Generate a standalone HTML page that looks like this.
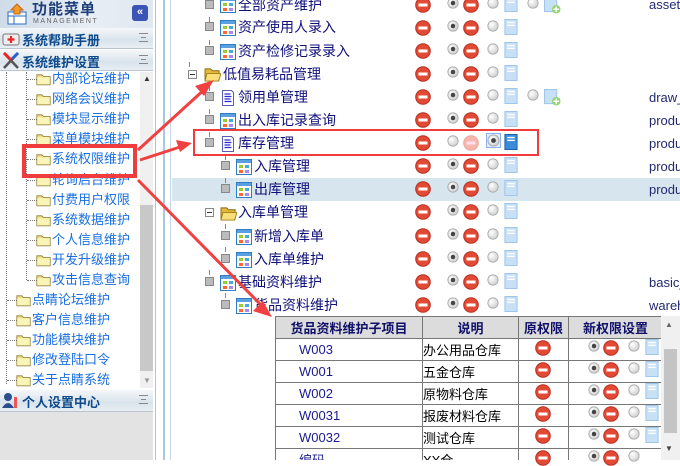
<!DOCTYPE html><html><head><meta charset="utf-8"><style>
*{margin:0;padding:0;box-sizing:border-box}
body{width:680px;height:460px;overflow:hidden;position:relative;background:#fff;font-family:"Liberation Sans","Noto Sans CJK SC",sans-serif}
.a{position:absolute}
.lt{position:absolute;font-size:13px;color:#1a6fe0;white-space:nowrap;line-height:16px}
.mt{position:absolute;font-size:14px;color:#10107a;white-space:nowrap;line-height:18px}
.rt{position:absolute;left:649px;font-size:13px;color:#222a70;white-space:nowrap}
.bar{position:absolute;left:0;width:153px;height:21px;background:linear-gradient(#f4f7fa,#d9e3ec 60%,#e8eef3);border-bottom:1px solid #b9c6d2}
.bar b{position:absolute;left:22px;top:2px;font-size:13px;color:#0c4a8c;font-weight:bold}
.eq{position:absolute;right:5px;top:5px;width:9px;height:9px;border-top:1px solid #888;border-bottom:1px solid #888}
.eq:after{content:"";position:absolute;left:2px;top:3px;width:5px;height:1px;background:#888}
svg.i{position:absolute}
table{border-collapse:collapse}
td,th{border:1px solid #777;height:22px;font-size:13px}
th{background:#dcdcdc;color:#10106a;font-weight:bold}
</style></head><body>
<svg width="0" height="0" style="position:absolute">
<defs>
<radialGradient id="rg" cx=".35" cy=".35" r=".8"><stop offset="0" stop-color="#fff"/><stop offset="1" stop-color="#c8c8c8"/></radialGradient>
<symbol id="stop" viewBox="0 0 16 16"><circle cx="8" cy="8" r="7.3" fill="#e24a36" stroke="#b8301f"/><rect x="3.5" y="6.5" width="9" height="3" fill="#fff"/></symbol>
<symbol id="stopf" viewBox="0 0 16 16"><circle cx="8" cy="8" r="7.3" fill="#f5b8ae" stroke="#eea59a"/><rect x="3.5" y="6.5" width="9" height="3" fill="#fde"/></symbol>
<symbol id="rad" viewBox="0 0 14 14"><circle cx="7" cy="7" r="6" fill="url(#rg)" stroke="#a8a8a8"/></symbol>
<symbol id="radc" viewBox="0 0 14 14"><circle cx="7" cy="7" r="6" fill="url(#rg)" stroke="#a8a8a8"/><circle cx="7" cy="7" r="2.6" fill="#444"/></symbol>
<symbol id="doc" viewBox="0 0 14 17"><rect x=".5" y=".5" width="13" height="16" fill="#c8e0f6" stroke="#9cc4ea"/><rect x="3" y="3" width="8" height="1.5" fill="#fff"/><rect x="3" y="6" width="8" height="1.5" fill="#fff"/></symbol>
<symbol id="docd" viewBox="0 0 14 17"><rect x=".5" y=".5" width="13" height="16" fill="#3a8cd8" stroke="#1d5fa6"/><rect x="3" y="3" width="8" height="1.5" fill="#fff"/><rect x="3" y="6" width="8" height="1.5" fill="#fff"/></symbol>
<symbol id="docp" viewBox="0 0 18 18"><rect x=".5" y=".5" width="13" height="15" fill="#c8e0f6" stroke="#9cc4ea"/><circle cx="13" cy="13" r="4.5" fill="#8fd56a"/><path d="M13 10v6M10 13h6" stroke="#fff" stroke-width="1.6"/></symbol>
<symbol id="grid" viewBox="0 0 16 16"><rect x=".5" y=".5" width="15" height="15" fill="#fff" stroke="#2f7cc8"/><rect x="1" y="1" width="14" height="3" fill="#5aa0e0"/><rect x="3" y="6" width="4" height="3" fill="#9c3"/><rect x="9" y="6" width="4" height="3" fill="#4ad"/><rect x="3" y="11" width="4" height="3" fill="#f63"/><rect x="9" y="11" width="4" height="3" fill="#a8e"/></symbol>
<symbol id="page" viewBox="0 0 16 16"><path d="M2.5 .5h9l2 2v13h-11z" fill="#fff" stroke="#5b5bb0"/><path d="M4.5 4h6M4.5 6.5h7M4.5 9h6M4.5 11.5h7" stroke="#2a2ad0" stroke-width="1.2"/></symbol>
<symbol id="fold" viewBox="0 0 18 16"><path d="M1 3h6l2 2h8v10H1z" fill="#efe08a" stroke="#8a7a30"/><path d="M1.5 6h15v8.5h-15z" fill="#fbf4b8"/></symbol>
<symbol id="fopen" viewBox="0 0 18 16"><path d="M1 2h6l2 2h7v10H1z" fill="#e2b840" stroke="#8a6a10"/><path d="M3 7h15l-2.5 8H1z" fill="#f8df7a" stroke="#a07c10"/></symbol>
<symbol id="minus" viewBox="0 0 9 9"><rect x=".5" y=".5" width="8" height="8" fill="#fff" stroke="#888"/><path d="M2 4.5h5" stroke="#333"/></symbol>
</defs></svg>

<!-- LEFT PANEL -->
<div class="a" style="left:0;top:0;width:153px;height:28px;background:linear-gradient(90deg,#cfdbe8,#e8eef5 60%,#dfe7f0)"></div>
<svg class="i" style="left:6px;top:3px" width="22" height="22" viewBox="0 0 22 22"><rect x="2" y="9" width="18" height="12" fill="#fff" stroke="#2a6fc0"/><path d="M2 13h18M8 13v8" stroke="#2a6fc0"/><path d="M11 1l6 6h-3v4h-6V7H5z" fill="#f39a2a" stroke="#c0661a"/></svg>
<div class="a" style="left:32px;top:1px;font-size:15px;line-height:17px;font-weight:bold;color:#1f3f7a;letter-spacing:1px">功能菜单</div>
<div class="a" style="left:33px;top:18px;font-size:7px;line-height:8px;letter-spacing:1.5px;color:#666">MANAGEMENT</div>
<div class="a" style="left:132px;top:5px;width:16px;height:16px;background:#3a55b5;border-radius:3px;color:#fff;font-size:11px;text-align:center;line-height:15px;font-weight:bold">«</div>
<div class="bar" style="top:28px"><svg class="i" style="left:2px;top:3px" width="18" height="15" viewBox="0 0 18 15"><rect x="1" y="3" width="16" height="11" rx="2" fill="#eee" stroke="#777"/><path d="M9 5v7M5.5 8.5h7" stroke="#e22" stroke-width="2.2"/></svg><b>系统帮助手册</b><span class="eq"></span></div>
<div class="bar" style="top:50px"><svg class="i" style="left:2px;top:1px" width="18" height="19" viewBox="0 0 18 19"><path d="M2 2l14 15M16 2L2 17" stroke="#555" stroke-width="2.5"/><path d="M2 2l7 7" stroke="#e22" stroke-width="3"/><path d="M16 2l-6 6" stroke="#2a5fd0" stroke-width="3"/></svg><b>系统维护设置</b><span class="eq"></span></div>
<div class="a" style="left:0;top:72px;width:140px;height:316px;background:#fff"></div>
<div class="a" style="left:140px;top:72px;width:13px;height:316px;background:#f0f0f0"></div>
<div class="a" style="left:140px;top:205px;width:13px;height:166px;background:#c8c8c8"></div>
<div class="a" style="left:143px;top:74px;font-size:8px;color:#333">▲</div>
<div class="a" style="left:143px;top:376px;font-size:8px;color:#999">▼</div>
<div class="a" style="left:6px;top:72px;height:312px;border-left:1px dotted #777"></div>
<div class="a" style="left:26px;top:72px;height:208px;border-left:1px dotted #777"></div>
<div class="lt" style="left:52px;top:71px">内部论坛维护</div>
<div class="lt" style="left:52px;top:91px">网络会议维护</div>
<div class="lt" style="left:52px;top:111px">模块显示维护</div>
<div class="lt" style="left:52px;top:131px">菜单模块维护</div>
<div class="lt" style="left:52px;top:151px">系统权限维护</div>
<div class="lt" style="left:52px;top:172px">轮询启台维护</div>
<div class="lt" style="left:52px;top:192px">付费用户权限</div>
<div class="lt" style="left:52px;top:212px">系统数据维护</div>
<div class="lt" style="left:52px;top:232px">个人信息维护</div>
<div class="lt" style="left:52px;top:252px">开发升级维护</div>
<div class="lt" style="left:52px;top:272px">攻击信息查询</div>
<div class="lt" style="left:32px;top:292px">点睛论坛维护</div>
<div class="lt" style="left:32px;top:312px">客户信息维护</div>
<div class="lt" style="left:32px;top:332px">功能模块维护</div>
<div class="lt" style="left:32px;top:352px">修改登陆口令</div>
<div class="lt" style="left:32px;top:372px">关于点睛系统</div>
<div class="a" style="left:27px;top:79px;width:10px;border-top:1px dotted #777"></div><svg class="i" style="left:36px;top:72px" width="15" height="14"><use href="#fold"/></svg>
<div class="a" style="left:27px;top:99px;width:10px;border-top:1px dotted #777"></div><svg class="i" style="left:36px;top:92px" width="15" height="14"><use href="#fold"/></svg>
<div class="a" style="left:27px;top:119px;width:10px;border-top:1px dotted #777"></div><svg class="i" style="left:36px;top:112px" width="15" height="14"><use href="#fold"/></svg>
<div class="a" style="left:27px;top:139px;width:10px;border-top:1px dotted #777"></div><svg class="i" style="left:36px;top:132px" width="15" height="14"><use href="#fold"/></svg>
<div class="a" style="left:27px;top:159px;width:10px;border-top:1px dotted #777"></div><svg class="i" style="left:36px;top:152px" width="15" height="14"><use href="#fold"/></svg>
<div class="a" style="left:27px;top:180px;width:10px;border-top:1px dotted #777"></div><svg class="i" style="left:36px;top:173px" width="15" height="14"><use href="#fold"/></svg>
<div class="a" style="left:27px;top:200px;width:10px;border-top:1px dotted #777"></div><svg class="i" style="left:36px;top:193px" width="15" height="14"><use href="#fold"/></svg>
<div class="a" style="left:27px;top:220px;width:10px;border-top:1px dotted #777"></div><svg class="i" style="left:36px;top:213px" width="15" height="14"><use href="#fold"/></svg>
<div class="a" style="left:27px;top:240px;width:10px;border-top:1px dotted #777"></div><svg class="i" style="left:36px;top:233px" width="15" height="14"><use href="#fold"/></svg>
<div class="a" style="left:27px;top:260px;width:10px;border-top:1px dotted #777"></div><svg class="i" style="left:36px;top:253px" width="15" height="14"><use href="#fold"/></svg>
<div class="a" style="left:27px;top:280px;width:10px;border-top:1px dotted #777"></div><svg class="i" style="left:36px;top:273px" width="15" height="14"><use href="#fold"/></svg>
<div class="a" style="left:7px;top:300px;width:10px;border-top:1px dotted #777"></div><svg class="i" style="left:16px;top:293px" width="15" height="14"><use href="#fold"/></svg>
<div class="a" style="left:7px;top:320px;width:10px;border-top:1px dotted #777"></div><svg class="i" style="left:16px;top:313px" width="15" height="14"><use href="#fold"/></svg>
<div class="a" style="left:7px;top:340px;width:10px;border-top:1px dotted #777"></div><svg class="i" style="left:16px;top:333px" width="15" height="14"><use href="#fold"/></svg>
<div class="a" style="left:7px;top:360px;width:10px;border-top:1px dotted #777"></div><svg class="i" style="left:16px;top:353px" width="15" height="14"><use href="#fold"/></svg>
<div class="a" style="left:7px;top:380px;width:10px;border-top:1px dotted #777"></div><svg class="i" style="left:16px;top:373px" width="15" height="14"><use href="#fold"/></svg>
<div class="bar" style="top:390px;height:22px"><svg class="i" style="left:2px;top:2px" width="18" height="17" viewBox="0 0 18 17"><circle cx="6" cy="5" r="4" fill="#2a4f90"/><path d="M0 16q6-10 12 0z" fill="#2a4f90"/><rect x="12" y="5" width="3" height="11" fill="#e55"/></svg><b>个人设置中心</b><span class="eq"></span></div>
<div class="a" style="left:0;top:412px;width:153px;height:48px;background-color:#fff;background-image:radial-gradient(#999 0.6px,transparent 0.8px);background-size:2px 2px"></div>
<div class="a" style="left:153px;top:0;width:19px;height:460px;background:#fff"></div>
<div class="a" style="left:155px;top:0;width:1px;height:460px;background:#aac4dc"></div>
<div class="a" style="left:163px;top:0;width:2px;height:460px;background:#a9c6e2"></div>
<div class="a" style="left:170px;top:0;width:1px;height:460px;background:#c4d6e6"></div>

<!-- MAIN -->
<div class="a" style="left:172px;top:178px;width:508px;height:23px;background:#d6e5ee"></div>
<div class="a" style="left:189px;top:62px;width:1px;height:5px;background:#888"></div>
<div class="a" style="left:209px;top:0;width:1px;height:8px;background:#888"></div>
<div class="a" style="left:209px;top:17px;width:1px;height:5px;background:#888"></div>
<div class="a" style="left:209px;top:40px;width:1px;height:5px;background:#888"></div>
<div class="a" style="left:209px;top:86px;width:1px;height:5px;background:#888"></div>
<div class="a" style="left:209px;top:109px;width:1px;height:5px;background:#888"></div>
<div class="a" style="left:209px;top:132px;width:1px;height:5px;background:#888"></div>
<div class="a" style="left:209px;top:270px;width:1px;height:5px;background:#888"></div>
<div class="a" style="left:225px;top:155px;width:1px;height:5px;background:#888"></div>
<div class="a" style="left:225px;top:178px;width:1px;height:5px;background:#888"></div>
<div class="a" style="left:225px;top:224px;width:1px;height:5px;background:#888"></div>
<div class="a" style="left:225px;top:247px;width:1px;height:5px;background:#888"></div>
<div class="a" style="left:225px;top:293px;width:1px;height:5px;background:#888"></div>
<div class="a" style="left:205px;top:0;width:9px;height:9px;background:#bbb;border:1px solid #888"></div>
<div class="a" style="left:205px;top:22px;width:9px;height:9px;background:#bbb;border:1px solid #888"></div>
<div class="a" style="left:205px;top:46px;width:9px;height:9px;background:#bbb;border:1px solid #888"></div>
<svg class="i" style="left:188px;top:70px" width="9" height="9"><use href="#minus"/></svg>
<div class="a" style="left:205px;top:92px;width:9px;height:9px;background:#bbb;border:1px solid #888"></div>
<div class="a" style="left:205px;top:115px;width:9px;height:9px;background:#bbb;border:1px solid #888"></div>
<div class="a" style="left:205px;top:138px;width:9px;height:9px;background:#bbb;border:1px solid #888"></div>
<div class="a" style="left:221px;top:161px;width:9px;height:9px;background:#bbb;border:1px solid #888"></div>
<div class="a" style="left:221px;top:184px;width:9px;height:9px;background:#bbb;border:1px solid #888"></div>
<svg class="i" style="left:205px;top:208px" width="9" height="9"><use href="#minus"/></svg>
<div class="a" style="left:221px;top:231px;width:9px;height:9px;background:#bbb;border:1px solid #888"></div>
<div class="a" style="left:221px;top:254px;width:9px;height:9px;background:#bbb;border:1px solid #888"></div>
<div class="a" style="left:205px;top:277px;width:9px;height:9px;background:#bbb;border:1px solid #888"></div>
<div class="a" style="left:221px;top:300px;width:9px;height:9px;background:#bbb;border:1px solid #888"></div>
<svg class="i" style="left:220px;top:-3px" width="16" height="16"><use href="#grid"/></svg>
<svg class="i" style="left:220px;top:20px" width="16" height="16"><use href="#grid"/></svg>
<svg class="i" style="left:220px;top:44px" width="16" height="16"><use href="#grid"/></svg>
<svg class="i" style="left:204px;top:67px" width="17" height="15"><use href="#fopen"/></svg>
<svg class="i" style="left:220px;top:90px" width="16" height="16"><use href="#page"/></svg>
<svg class="i" style="left:220px;top:113px" width="16" height="16"><use href="#grid"/></svg>
<svg class="i" style="left:220px;top:136px" width="16" height="16"><use href="#page"/></svg>
<svg class="i" style="left:236px;top:159px" width="16" height="16"><use href="#grid"/></svg>
<svg class="i" style="left:236px;top:182px" width="16" height="16"><use href="#grid"/></svg>
<svg class="i" style="left:220px;top:206px" width="17" height="15"><use href="#fopen"/></svg>
<svg class="i" style="left:236px;top:229px" width="16" height="16"><use href="#grid"/></svg>
<svg class="i" style="left:236px;top:252px" width="16" height="16"><use href="#grid"/></svg>
<svg class="i" style="left:220px;top:275px" width="16" height="16"><use href="#grid"/></svg>
<svg class="i" style="left:236px;top:298px" width="16" height="16"><use href="#grid"/></svg>
<div class="mt" style="left:238px;top:-4px">全部资产维护</div>
<div class="mt" style="left:238px;top:18px">资产使用人录入</div>
<div class="mt" style="left:238px;top:42px">资产检修记录录入</div>
<div class="mt" style="left:223px;top:65px">低值易耗品管理</div>
<div class="mt" style="left:238px;top:88px">领用单管理</div>
<div class="mt" style="left:238px;top:111px">出入库记录查询</div>
<div class="mt" style="left:238px;top:134px">库存管理</div>
<div class="mt" style="left:254px;top:157px">入库管理</div>
<div class="mt" style="left:254px;top:180px">出库管理</div>
<div class="mt" style="left:238px;top:203px">入库单管理</div>
<div class="mt" style="left:254px;top:227px">新增入库单</div>
<div class="mt" style="left:254px;top:250px">入库单维护</div>
<div class="mt" style="left:238px;top:273px">基础资料维护</div>
<div class="mt" style="left:254px;top:296px">货品资料维护</div>
<div class="rt" style="top:-3px">assets</div>
<div class="rt" style="top:90px">draw_</div>
<div class="rt" style="top:113px">produ</div>
<div class="rt" style="top:136px">produ</div>
<div class="rt" style="top:159px">produ</div>
<div class="rt" style="top:182px">produ</div>
<div class="rt" style="top:275px">basic_</div>
<div class="rt" style="top:298px">wareh</div>
<svg class="i" style="left:415px;top:-3px" width="16" height="16"><use href="#stop"/></svg><svg class="i" style="left:447px;top:-3px" width="12" height="12"><use href="#radc"/></svg><svg class="i" style="left:463px;top:-3px" width="16" height="16"><use href="#stop"/></svg><svg class="i" style="left:487px;top:-3px" width="12" height="12"><use href="#rad"/></svg><svg class="i" style="left:504px;top:-4px" width="14" height="16"><use href="#doc"/></svg><svg class="i" style="left:527px;top:-3px" width="12" height="12"><use href="#rad"/></svg><svg class="i" style="left:544px;top:-3px" width="17" height="17"><use href="#docp"/></svg>
<svg class="i" style="left:415px;top:20px" width="16" height="16"><use href="#stop"/></svg><svg class="i" style="left:447px;top:20px" width="12" height="12"><use href="#radc"/></svg><svg class="i" style="left:463px;top:20px" width="16" height="16"><use href="#stop"/></svg><svg class="i" style="left:487px;top:20px" width="12" height="12"><use href="#rad"/></svg><svg class="i" style="left:504px;top:19px" width="14" height="16"><use href="#doc"/></svg>
<svg class="i" style="left:415px;top:43px" width="16" height="16"><use href="#stop"/></svg><svg class="i" style="left:447px;top:43px" width="12" height="12"><use href="#radc"/></svg><svg class="i" style="left:463px;top:43px" width="16" height="16"><use href="#stop"/></svg><svg class="i" style="left:487px;top:43px" width="12" height="12"><use href="#rad"/></svg><svg class="i" style="left:504px;top:42px" width="14" height="16"><use href="#doc"/></svg>
<svg class="i" style="left:415px;top:66px" width="16" height="16"><use href="#stop"/></svg><svg class="i" style="left:447px;top:66px" width="12" height="12"><use href="#radc"/></svg><svg class="i" style="left:463px;top:66px" width="16" height="16"><use href="#stop"/></svg><svg class="i" style="left:487px;top:66px" width="12" height="12"><use href="#rad"/></svg><svg class="i" style="left:504px;top:65px" width="14" height="16"><use href="#doc"/></svg>
<svg class="i" style="left:415px;top:89px" width="16" height="16"><use href="#stop"/></svg><svg class="i" style="left:447px;top:89px" width="12" height="12"><use href="#radc"/></svg><svg class="i" style="left:463px;top:89px" width="16" height="16"><use href="#stop"/></svg><svg class="i" style="left:487px;top:89px" width="12" height="12"><use href="#rad"/></svg><svg class="i" style="left:504px;top:88px" width="14" height="16"><use href="#doc"/></svg><svg class="i" style="left:527px;top:89px" width="12" height="12"><use href="#rad"/></svg><svg class="i" style="left:544px;top:89px" width="17" height="17"><use href="#docp"/></svg>
<svg class="i" style="left:415px;top:112px" width="16" height="16"><use href="#stop"/></svg><svg class="i" style="left:447px;top:112px" width="12" height="12"><use href="#radc"/></svg><svg class="i" style="left:463px;top:112px" width="16" height="16"><use href="#stop"/></svg><svg class="i" style="left:487px;top:112px" width="12" height="12"><use href="#rad"/></svg><svg class="i" style="left:504px;top:111px" width="14" height="16"><use href="#doc"/></svg>
<svg class="i" style="left:415px;top:135px" width="16" height="16"><use href="#stop"/></svg><svg class="i" style="left:447px;top:135px" width="12" height="12"><use href="#rad"/></svg><svg class="i" style="left:463px;top:135px" width="16" height="16"><use href="#stopf"/></svg><div class="a" style="left:486px;top:133px;width:15px;height:15px;border:1px solid #8ab4f0;background:#e0ecff"></div><svg class="i" style="left:487px;top:134px" width="13" height="13"><use href="#radc"/></svg><svg class="i" style="left:504px;top:134px" width="14" height="16"><use href="#docd"/></svg>
<svg class="i" style="left:415px;top:158px" width="16" height="16"><use href="#stop"/></svg><svg class="i" style="left:447px;top:158px" width="12" height="12"><use href="#radc"/></svg><svg class="i" style="left:463px;top:158px" width="16" height="16"><use href="#stop"/></svg><svg class="i" style="left:487px;top:158px" width="12" height="12"><use href="#rad"/></svg><svg class="i" style="left:504px;top:157px" width="14" height="16"><use href="#doc"/></svg>
<svg class="i" style="left:415px;top:181px" width="16" height="16"><use href="#stop"/></svg><svg class="i" style="left:447px;top:181px" width="12" height="12"><use href="#radc"/></svg><svg class="i" style="left:463px;top:181px" width="16" height="16"><use href="#stop"/></svg><svg class="i" style="left:487px;top:181px" width="12" height="12"><use href="#rad"/></svg><svg class="i" style="left:504px;top:180px" width="14" height="16"><use href="#doc"/></svg>
<svg class="i" style="left:415px;top:204px" width="16" height="16"><use href="#stop"/></svg><svg class="i" style="left:447px;top:204px" width="12" height="12"><use href="#radc"/></svg><svg class="i" style="left:463px;top:204px" width="16" height="16"><use href="#stop"/></svg><svg class="i" style="left:487px;top:204px" width="12" height="12"><use href="#rad"/></svg><svg class="i" style="left:504px;top:203px" width="14" height="16"><use href="#doc"/></svg>
<svg class="i" style="left:415px;top:228px" width="16" height="16"><use href="#stop"/></svg><svg class="i" style="left:447px;top:228px" width="12" height="12"><use href="#radc"/></svg><svg class="i" style="left:463px;top:228px" width="16" height="16"><use href="#stop"/></svg><svg class="i" style="left:487px;top:228px" width="12" height="12"><use href="#rad"/></svg><svg class="i" style="left:504px;top:227px" width="14" height="16"><use href="#doc"/></svg>
<svg class="i" style="left:415px;top:251px" width="16" height="16"><use href="#stop"/></svg><svg class="i" style="left:447px;top:251px" width="12" height="12"><use href="#radc"/></svg><svg class="i" style="left:463px;top:251px" width="16" height="16"><use href="#stop"/></svg><svg class="i" style="left:487px;top:251px" width="12" height="12"><use href="#rad"/></svg><svg class="i" style="left:504px;top:250px" width="14" height="16"><use href="#doc"/></svg>
<svg class="i" style="left:415px;top:274px" width="16" height="16"><use href="#stop"/></svg><svg class="i" style="left:447px;top:274px" width="12" height="12"><use href="#radc"/></svg><svg class="i" style="left:463px;top:274px" width="16" height="16"><use href="#stop"/></svg><svg class="i" style="left:487px;top:274px" width="12" height="12"><use href="#rad"/></svg><svg class="i" style="left:504px;top:273px" width="14" height="16"><use href="#doc"/></svg>
<svg class="i" style="left:415px;top:297px" width="16" height="16"><use href="#stop"/></svg><svg class="i" style="left:447px;top:297px" width="12" height="12"><use href="#radc"/></svg><svg class="i" style="left:463px;top:297px" width="16" height="16"><use href="#stop"/></svg><svg class="i" style="left:487px;top:297px" width="12" height="12"><use href="#rad"/></svg><svg class="i" style="left:504px;top:296px" width="14" height="16"><use href="#doc"/></svg>

<div class="a" style="left:275px;top:316px;width:405px;height:144px;background:#fff;overflow:hidden">
<table style="position:absolute;left:0;top:0;width:387px;table-layout:fixed">
<colgroup><col style="width:147px"><col style="width:96px"><col style="width:50px"><col style="width:94px"></colgroup>
<tr><th>货品资料维护子项目</th><th>说明</th><th>原权限</th><th>新权限设置</th></tr>
<tr><td style="padding-left:23px;color:#1a1a90">W003</td><td>办公用品仓库</td><td></td><td></td></tr>
<tr><td style="padding-left:23px;color:#1a1a90">W001</td><td>五金仓库</td><td></td><td></td></tr>
<tr><td style="padding-left:23px;color:#1a1a90">W002</td><td>原物料仓库</td><td></td><td></td></tr>
<tr><td style="padding-left:23px;color:#1a1a90">W0031</td><td>报废材料仓库</td><td></td><td></td></tr>
<tr><td style="padding-left:23px;color:#1a1a90">W0032</td><td>测试仓库</td><td></td><td></td></tr>
<tr><td style="padding-left:23px;color:#1a1a90">编码</td><td>XX仓</td><td></td><td></td></tr>
</table>
<div class="a" style="left:386px;top:0;width:19px;height:144px;background:#f0f0f0"></div>
<div class="a" style="left:389px;top:33px;width:13px;height:84px;background:#c4c4c4"></div>
<div class="a" style="left:390px;top:4px;font-size:8px;color:#666">▲</div>
<div class="a" style="left:390px;top:128px;font-size:8px;color:#444">▼</div>
</div>
<svg class="i" style="left:535px;top:340px" width="16" height="16"><use href="#stop"/></svg><svg class="i" style="left:588px;top:340px" width="12" height="12"><use href="#radc"/></svg><svg class="i" style="left:603px;top:340px" width="16" height="16"><use href="#stop"/></svg><svg class="i" style="left:628px;top:340px" width="12" height="12"><use href="#rad"/></svg><svg class="i" style="left:645px;top:339px" width="14" height="16"><use href="#doc"/></svg>
<svg class="i" style="left:535px;top:362px" width="16" height="16"><use href="#stop"/></svg><svg class="i" style="left:588px;top:362px" width="12" height="12"><use href="#radc"/></svg><svg class="i" style="left:603px;top:362px" width="16" height="16"><use href="#stop"/></svg><svg class="i" style="left:628px;top:362px" width="12" height="12"><use href="#rad"/></svg><svg class="i" style="left:645px;top:361px" width="14" height="16"><use href="#doc"/></svg>
<svg class="i" style="left:535px;top:384px" width="16" height="16"><use href="#stop"/></svg><svg class="i" style="left:588px;top:384px" width="12" height="12"><use href="#radc"/></svg><svg class="i" style="left:603px;top:384px" width="16" height="16"><use href="#stop"/></svg><svg class="i" style="left:628px;top:384px" width="12" height="12"><use href="#rad"/></svg><svg class="i" style="left:645px;top:383px" width="14" height="16"><use href="#doc"/></svg>
<svg class="i" style="left:535px;top:406px" width="16" height="16"><use href="#stop"/></svg><svg class="i" style="left:588px;top:406px" width="12" height="12"><use href="#radc"/></svg><svg class="i" style="left:603px;top:406px" width="16" height="16"><use href="#stop"/></svg><svg class="i" style="left:628px;top:406px" width="12" height="12"><use href="#rad"/></svg><svg class="i" style="left:645px;top:405px" width="14" height="16"><use href="#doc"/></svg>
<svg class="i" style="left:535px;top:428px" width="16" height="16"><use href="#stop"/></svg><svg class="i" style="left:588px;top:428px" width="12" height="12"><use href="#radc"/></svg><svg class="i" style="left:603px;top:428px" width="16" height="16"><use href="#stop"/></svg><svg class="i" style="left:628px;top:428px" width="12" height="12"><use href="#rad"/></svg><svg class="i" style="left:645px;top:427px" width="14" height="16"><use href="#doc"/></svg>
<svg class="i" style="left:535px;top:450px" width="16" height="16"><use href="#stop"/></svg><svg class="i" style="left:588px;top:450px" width="12" height="12"><use href="#radc"/></svg><svg class="i" style="left:603px;top:450px" width="16" height="16"><use href="#stop"/></svg><svg class="i" style="left:628px;top:450px" width="12" height="12"><use href="#rad"/></svg>

<div class="a" style="left:22px;top:144px;width:115px;height:34px;border:4px solid #f03c3c"></div>
<div class="a" style="left:193px;top:129px;width:346px;height:27px;border:2px solid #f03c3c"></div>
<svg class="i" style="left:0;top:0" width="680" height="460">
<g stroke="#f04040" stroke-width="3" fill="#f04040">
<line x1="138" y1="150" x2="206" y2="88"/><path d="M214 80l-19 6 9 10z" stroke="none"/>
<line x1="140" y1="160" x2="180" y2="147"/><path d="M192 143l-16-3 4 12z" stroke="none"/>
<line x1="138" y1="180" x2="262" y2="306"/><path d="M272 317l-19-6 10-10z" stroke="none"/>
</g></svg>
</body></html>
